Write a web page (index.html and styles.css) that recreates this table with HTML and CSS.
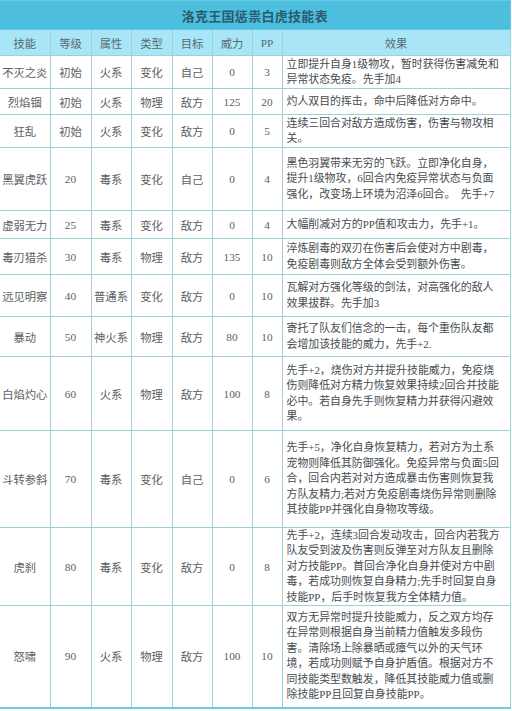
FILE: index.html
```html
<!DOCTYPE html>
<html lang="zh">
<head>
<meta charset="utf-8">
<title>洛克王国惩祟白虎技能表</title>
<link rel="stylesheet" href="styles.css">
</head>
<body>
<table class="skills">
  <colgroup>
    <col class="c-name"><col class="c-lv"><col class="c-attr"><col class="c-type"><col class="c-tgt"><col class="c-pow"><col class="c-pp"><col class="c-eff">
  </colgroup>
  <thead>
    <tr class="title-row"><th colspan="8">洛克王国惩祟白虎技能表</th></tr>
    <tr class="head-row"><th>技能</th><th>等级</th><th>属性</th><th>类型</th><th>目标</th><th>威力</th><th>PP</th><th>效果</th></tr>
  </thead>
  <tbody>
    <tr class="r1"><td>不灭之炎</td><td>初始</td><td>火系</td><td>变化</td><td>自己</td><td>0</td><td>3</td><td class="eff">立即提升自身1级物攻，暂时获得伤害减免和<br>异常状态免疫。先手加4</td></tr>
    <tr class="r2"><td>烈焰锢</td><td>初始</td><td>火系</td><td>物理</td><td>敌方</td><td>125</td><td>20</td><td class="eff">灼人双目的挥击，命中后降低对方命中。</td></tr>
    <tr class="r3"><td>狂乱</td><td>初始</td><td>火系</td><td>变化</td><td>敌方</td><td>0</td><td>5</td><td class="eff">连续三回合对敌方造成伤害，伤害与物攻相<br>关。</td></tr>
    <tr class="r4"><td>黑翼虎跃</td><td>20</td><td>毒系</td><td>变化</td><td>自己</td><td>0</td><td>4</td><td class="eff">黑色羽翼带来无穷的飞跃。立即净化自身，<br>提升1级物攻，6回合内免疫异常状态与负面<br>强化，改变场上环境为沼泽6回合。&nbsp; 先手+7</td></tr>
    <tr class="r5"><td>虚弱无力</td><td>25</td><td>毒系</td><td>变化</td><td>敌方</td><td>0</td><td>4</td><td class="eff">大幅削减对方的PP值和攻击力，先手+1。</td></tr>
    <tr class="r6"><td>毒刃猎杀</td><td>30</td><td>毒系</td><td>物理</td><td>敌方</td><td>135</td><td>10</td><td class="eff">淬炼剧毒的双刃在伤害后会使对方中剧毒，<br>免疫剧毒则敌方全体会受到额外伤害。</td></tr>
    <tr class="r7"><td>远见明察</td><td>40</td><td>普通系</td><td>变化</td><td>敌方</td><td>0</td><td>10</td><td class="eff">瓦解对方强化等级的剑法，对高强化的敌人<br>效果拔群。先手加3</td></tr>
    <tr class="r8"><td>暴动</td><td>50</td><td>神火系</td><td>物理</td><td>敌方</td><td>80</td><td>10</td><td class="eff">寄托了队友们信念的一击，每个重伤队友都<br>会增加该技能的威力，先手+2.</td></tr>
    <tr class="r9"><td>白焰灼心</td><td>60</td><td>火系</td><td>物理</td><td>敌方</td><td>100</td><td>8</td><td class="eff">先手+2，烧伤对方并提升技能威力，免疫烧<br>伤则降低对方精力恢复效果持续2回合并技能<br>必中。若自身先手则恢复精力并获得闪避效<br>果。</td></tr>
    <tr class="r10"><td>斗转参斜</td><td>70</td><td>毒系</td><td>变化</td><td>自己</td><td>0</td><td>6</td><td class="eff">先手+5，净化自身恢复精力，若对方为土系<br>宠物则降低其防御强化。免疫异常与负面5回<br>合，回合内若对对方造成暴击伤害则恢复我<br>方队友精力;若对方免疫剧毒烧伤异常则删除<br>其技能PP并强化自身物攻等级。</td></tr>
    <tr class="r11"><td>虎刹</td><td>80</td><td>毒系</td><td>变化</td><td>敌方</td><td>0</td><td>8</td><td class="eff">先手+2，连续3回合发动攻击，回合内若我方<br>队友受到波及伤害则反弹至对方队友且删除<br>对方技能PP。首回合净化自身并使对方中剧<br>毒，若成功则恢复自身精力;先手时回复自身<br>技能PP，后手时恢复我方全体精力值。</td></tr>
    <tr class="r12"><td>怒啸</td><td>90</td><td>火系</td><td>物理</td><td>敌方</td><td>100</td><td>10</td><td class="eff">双方无异常时提升技能威力，反之双方均存<br>在异常则根据自身当前精力值触发多段伤<br>害。清除场上除暴晒或瘴气以外的天气环<br>境，若成功则赋予自身护盾值。根据对方不<br>同技能类型数触发，降低其技能威力值或删<br>除技能PP且回复自身技能PP。</td></tr>
  </tbody>
</table>
</body>
</html>
```

FILE: styles.css
```css
html, body {
  margin: 0;
  padding: 0;
  background: #ffffff;
}

.skills {
  width: 510px;
  border-collapse: collapse;
  table-layout: fixed;
  font-family: "Liberation Serif", "Noto Sans CJK SC", sans-serif;
  font-size: 11.3px;
  color: #5a6063;
  border-bottom: 2px solid #6fcbe6;
}

.c-name { width: 50px; }
.c-lv { width: 41px; }
.c-attr { width: 40px; }
.c-type { width: 41px; }
.c-tgt { width: 40px; }
.c-pow { width: 40px; }
.c-pp { width: 30px; }
.c-eff { width: 228px; }

.skills th,
.skills td {
  border: 1px solid #9fd0d8;
  padding: 0;
  text-align: center;
  vertical-align: middle;
  font-weight: normal;
}

.skills th:first-child,
.skills td:first-child {
  border-left: none;
}

.title-row th {
  height: 28px;
  background: #4bbfdd;
  border-top: 1px solid #c9ecf6;
  border-color: #6cc8e2;
  font-size: 13px;
  font-weight: bold;
  color: #2b5a6e;
  letter-spacing: 0.3px;
}

.head-row th {
  height: 25px;
  background: #a8e5f6;
  color: #5a6a70;
}

.skills td.eff {
  text-align: left;
  padding: 0 0 0 4px;
  white-space: nowrap;
  line-height: 15.4px;
  font-size: 10.9px;
  color: #464c4f;
}

.r1 { height: 33px; }
.r2 { height: 26px; }
.r3 { height: 33px; }
.r4 { height: 63px; }
.r5 { height: 28px; }
.r6 { height: 36px; }
.r7 { height: 42px; }
.r8 { height: 40px; }
.r9 { height: 74px; }
.r10 { height: 97px; }
.r11 { height: 78px; }
.r12 { height: 102px; }
```
